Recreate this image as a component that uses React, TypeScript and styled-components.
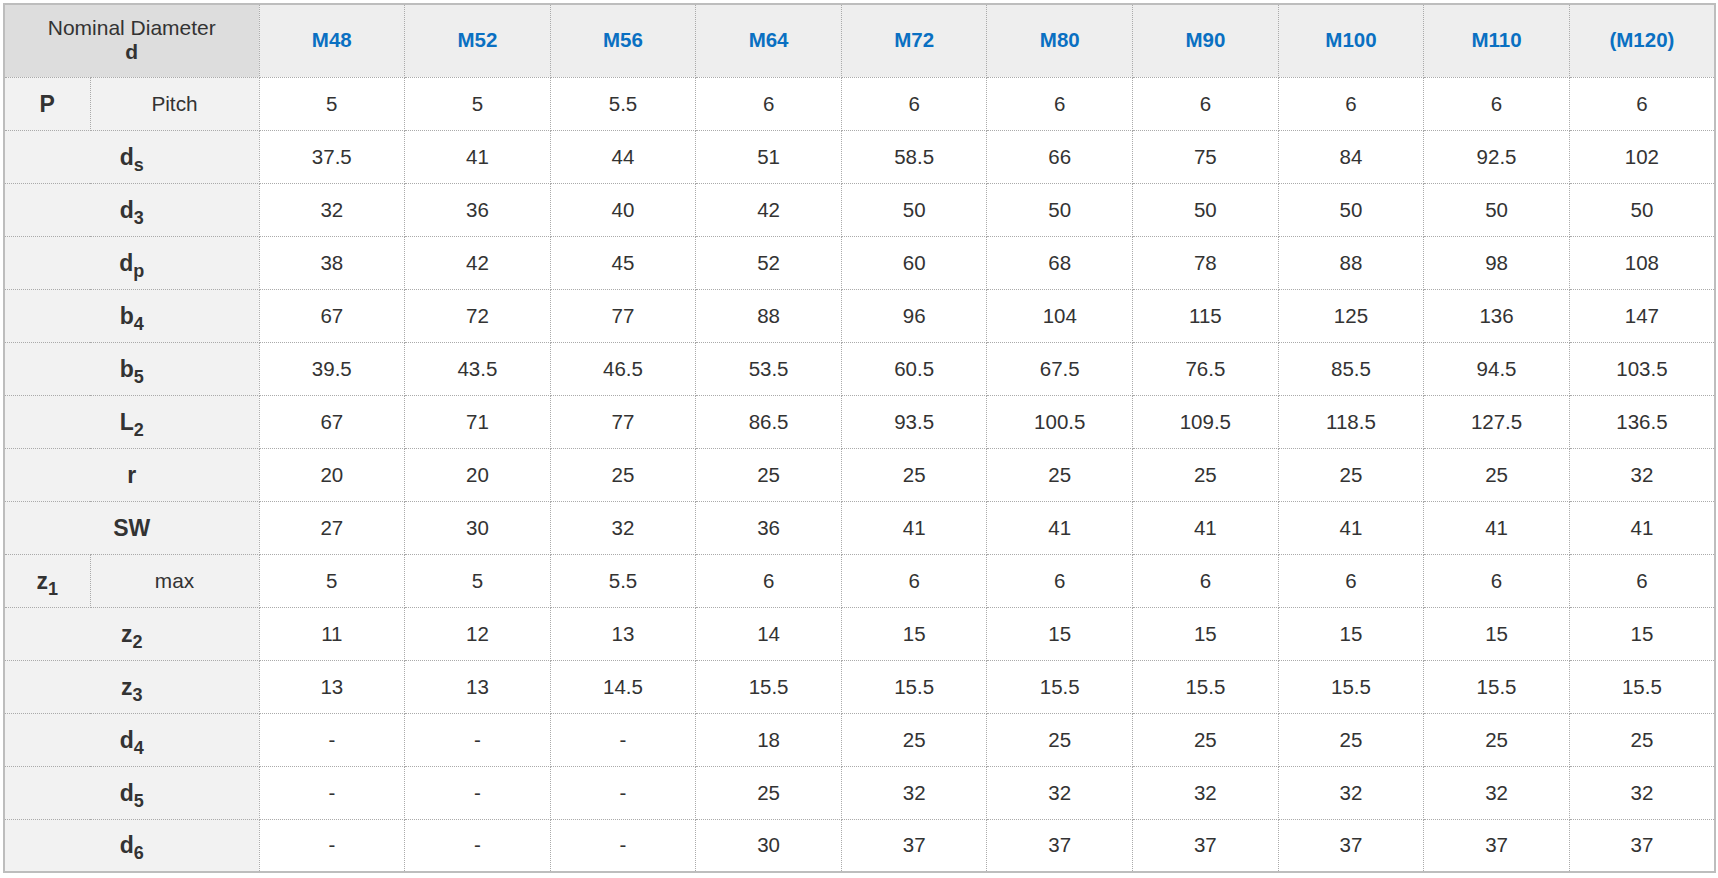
import React from "react";
import styled, { createGlobalStyle } from "styled-components";

const GlobalStyle = createGlobalStyle`
  html, body { margin: 0; padding: 0; background: #ffffff; }
  body { font-family: "Liberation Sans", Arial, sans-serif; color: #333333; }
`;

const Wrapper = styled.div`
  padding: 3px 0 0 3px;
`;

const Table = styled.table`
  border-collapse: collapse;
  table-layout: fixed;
  width: 1711px;
  border: 2px solid #bdbdbd;
  font-family: "Liberation Sans", Arial, sans-serif;
  font-size: 20.5px;
  color: #333333;
`;

const HeadRow = styled.tr`
  height: 73px;
`;

const BodyRow = styled.tr`
  height: 53px;
`;

const CornerCell = styled.th`
  background: #dddddd;
  font-weight: normal;
  font-size: 21px;
  line-height: 24px;
  text-align: center;
  vertical-align: middle;
  border: 1px dotted #aaaaaa;
  padding: 0 4px 2px;
`;

const CornerSymbol = styled.span`
  display: block;
  font-weight: bold;
`;

const SizeCell = styled.th`
  background: #eeeeee;
  color: #0a70c2;
  font-weight: bold;
  text-align: center;
  vertical-align: middle;
  border: 1px dotted #aaaaaa;
  padding: 0 0 2px;
`;

const LabelCell = styled.td<{ $bold?: boolean }>`
  background: #f2f2f2;
  text-align: center;
  vertical-align: middle;
  border: 1px dotted #aaaaaa;
  font-weight: ${(p) => (p.$bold ? "bold" : "normal")};
  font-size: ${(p) => (p.$bold ? "23px" : "20.8px")};
  padding: 0;
  line-height: 24px;
`;

const ValueCell = styled.td`
  background: #ffffff;
  text-align: center;
  vertical-align: middle;
  border: 1px dotted #aaaaaa;
  padding: 0;
  line-height: 24px;
`;

const Sub = styled.sub`
  font-size: 18px;
  line-height: 0;
  vertical-align: -6px;
`;

type Row = {
  sym: string;
  sub?: string;
  note?: string;
  values: string[];
};

const sizes = ["M48", "M52", "M56", "M64", "M72", "M80", "M90", "M100", "M110", "(M120)"];

const rows: Row[] = [
  { sym: "P", note: "Pitch", values: ["5", "5", "5.5", "6", "6", "6", "6", "6", "6", "6"] },
  { sym: "d", sub: "s", values: ["37.5", "41", "44", "51", "58.5", "66", "75", "84", "92.5", "102"] },
  { sym: "d", sub: "3", values: ["32", "36", "40", "42", "50", "50", "50", "50", "50", "50"] },
  { sym: "d", sub: "p", values: ["38", "42", "45", "52", "60", "68", "78", "88", "98", "108"] },
  { sym: "b", sub: "4", values: ["67", "72", "77", "88", "96", "104", "115", "125", "136", "147"] },
  { sym: "b", sub: "5", values: ["39.5", "43.5", "46.5", "53.5", "60.5", "67.5", "76.5", "85.5", "94.5", "103.5"] },
  { sym: "L", sub: "2", values: ["67", "71", "77", "86.5", "93.5", "100.5", "109.5", "118.5", "127.5", "136.5"] },
  { sym: "r", values: ["20", "20", "25", "25", "25", "25", "25", "25", "25", "32"] },
  { sym: "SW", values: ["27", "30", "32", "36", "41", "41", "41", "41", "41", "41"] },
  { sym: "z", sub: "1", note: "max", values: ["5", "5", "5.5", "6", "6", "6", "6", "6", "6", "6"] },
  { sym: "z", sub: "2", values: ["11", "12", "13", "14", "15", "15", "15", "15", "15", "15"] },
  { sym: "z", sub: "3", values: ["13", "13", "14.5", "15.5", "15.5", "15.5", "15.5", "15.5", "15.5", "15.5"] },
  { sym: "d", sub: "4", values: ["-", "-", "-", "18", "25", "25", "25", "25", "25", "25"] },
  { sym: "d", sub: "5", values: ["-", "-", "-", "25", "32", "32", "32", "32", "32", "32"] },
  { sym: "d", sub: "6", values: ["-", "-", "-", "30", "37", "37", "37", "37", "37", "37"] },
];

const Symbol: React.FC<{ row: Row }> = ({ row }) => (
  <>
    {row.sym}
    {row.sub && <Sub>{row.sub}</Sub>}
  </>
);

export default function App() {
  return (
    <>
      <GlobalStyle />
      <Wrapper>
        <Table>
          <colgroup>
            <col style={{ width: 86 }} />
            <col style={{ width: 169 }} />
            {sizes.map((s) => (
              <col key={s} style={{ width: 145.6 }} />
            ))}
          </colgroup>
          <thead>
            <HeadRow>
              <CornerCell colSpan={2}>
                Nominal Diameter
                <CornerSymbol>d</CornerSymbol>
              </CornerCell>
              {sizes.map((s) => (
                <SizeCell key={s}>{s}</SizeCell>
              ))}
            </HeadRow>
          </thead>
          <tbody>
            {rows.map((row, i) => (
              <BodyRow key={i}>
                {row.note ? (
                  <>
                    <LabelCell $bold>
                      <Symbol row={row} />
                    </LabelCell>
                    <LabelCell>{row.note}</LabelCell>
                  </>
                ) : (
                  <LabelCell $bold colSpan={2}>
                    <Symbol row={row} />
                  </LabelCell>
                )}
                {row.values.map((v, j) => (
                  <ValueCell key={j}>{v}</ValueCell>
                ))}
              </BodyRow>
            ))}
          </tbody>
        </Table>
      </Wrapper>
    </>
  );
}
